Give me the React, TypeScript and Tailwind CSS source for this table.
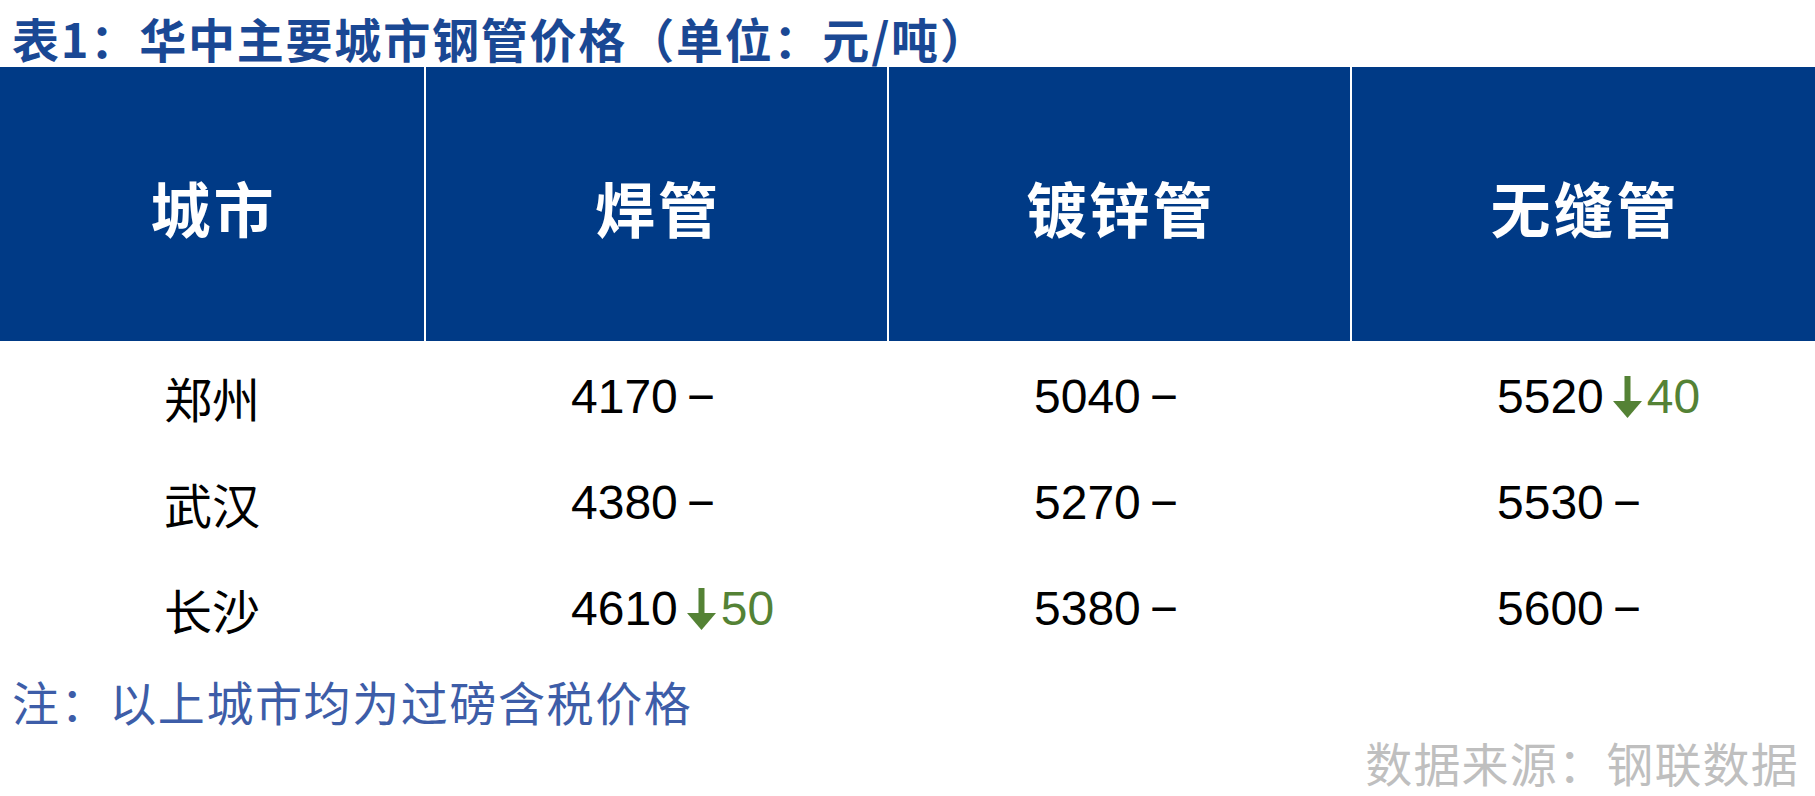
import React from "react";

const CJK = "font-['Noto_Sans_CJK_SC',sans-serif]";
const NUM = "font-['Liberation_Sans','Noto_Sans_CJK_SC',sans-serif]";

function DownArrow() {
  return (
    <svg width="29" height="42" viewBox="0 0 29 42" className="shrink-0">
      <rect x="11.5" y="0" width="6" height="27" fill="#548235" />
      <polygon points="0,25 29,25 14.5,42" fill="#548235" />
    </svg>
  );
}

type Cell = { v: string; d?: string };

const rows: { city: string; cells: Cell[] }[] = [
  { city: "郑州", cells: [{ v: "4170" }, { v: "5040" }, { v: "5520", d: "40" }] },
  { city: "武汉", cells: [{ v: "4380" }, { v: "5270" }, { v: "5530" }] },
  { city: "长沙", cells: [{ v: "4610", d: "50" }, { v: "5380" }, { v: "5600" }] },
];

function NumCell({ c }: { c: Cell }) {
  return (
    <div className={`flex items-center pl-[145px] ${NUM} text-[48px] leading-[56px] text-black`}>
      <span>{c.v}</span>
      {c.d ? (
        <>
          <span className="ml-[9px] flex items-center">
            <DownArrow />
          </span>
          <span className="ml-[5px] text-[#548235]">{c.d}</span>
        </>
      ) : (
        <span className="ml-[9px]">−</span>
      )}
    </div>
  );
}

export default function App() {
  const headers = ["城市", "焊管", "镀锌管", "无缝管"];
  return (
    <div className="w-[1815px] h-[796px] bg-white overflow-hidden">
      <div className={`h-[67px] pl-[12px] pt-[14px] ${CJK} text-[47px] leading-[47px] tracking-[1.8px] font-bold text-[#1a4894] whitespace-nowrap`}>
        表1：华中主要城市钢管价格（单位：元/吨）
      </div>
      <div className="grid grid-cols-[424px_461px_461px_463px] gap-x-[2px] h-[274px] bg-white">
        {headers.map((h) => (
          <div
            key={h}
            className={`bg-[#003a86] flex items-center justify-center pt-[6px] pl-[3px] ${CJK} text-[60px] leading-[60px] tracking-[3px] font-bold text-white`}
          >
            {h}
          </div>
        ))}
      </div>
      <div className="pt-[3px]">
        {rows.map((r) => (
          <div key={r.city} className="grid grid-cols-[424px_461px_461px_463px] gap-x-[2px] h-[106px]">
            <div className={`flex items-center justify-center ${CJK} text-[48px] leading-[48px] text-black`}>
              {r.city}
            </div>
            {r.cells.map((c, i) => (
              <NumCell key={i} c={c} />
            ))}
          </div>
        ))}
      </div>
      <div className={`h-[76px] flex items-center pl-[12px] ${CJK} text-[47px] leading-[47px] tracking-[1.6px] text-[#3d5da8] whitespace-nowrap`}>
        注：以上城市均为过磅含税价格
      </div>
      <div className={`h-[47px] flex items-center justify-end pr-[16px] ${CJK} text-[47px] leading-[47px] tracking-[1.2px] text-[#bfbfbf] whitespace-nowrap`}>
        数据来源：钢联数据
      </div>
    </div>
  );
}
